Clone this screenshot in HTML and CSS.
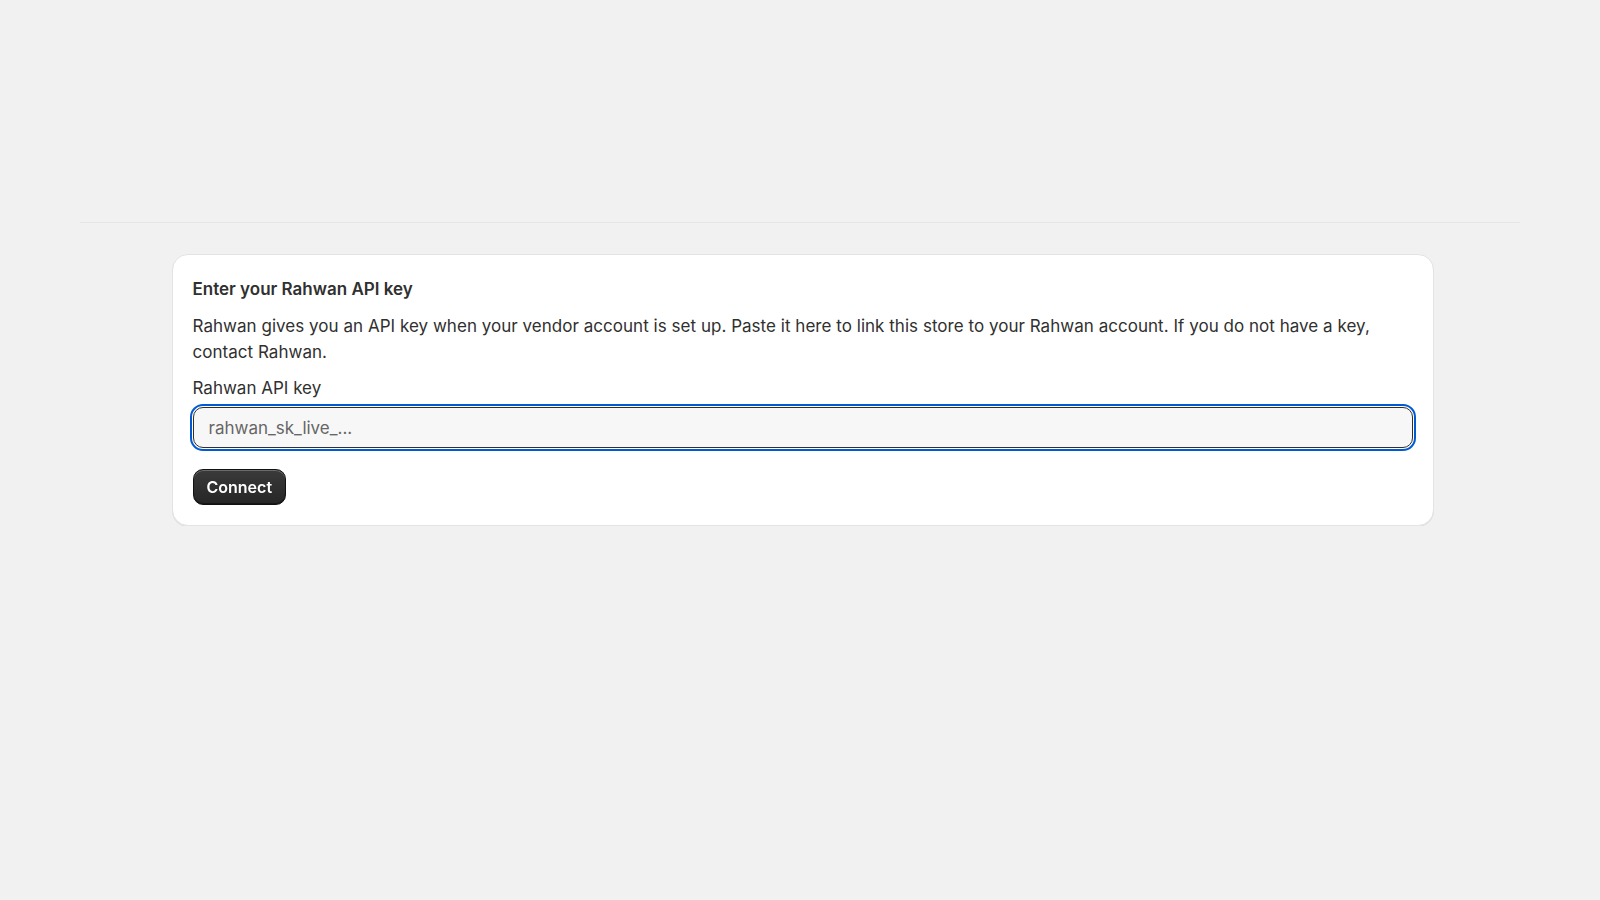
FILE: index.html
```html
<!DOCTYPE html>
<html lang="en">
<head>
  <meta charset="UTF-8" />
  <meta name="viewport" content="width=device-width, initial-scale=1" />
  <title>Connect Rahwan</title>
  <link rel="stylesheet" href="styles.css">
</head>
<body>
  <div class="page">
    <div class="page-header"></div>

    <div class="page-body">
      <div class="card">
        <h2 class="card-title">Enter your Rahwan API key</h2>
        <p class="card-text">
          Rahwan gives you an API key when your vendor account is set up. Paste it here to link this store to your Rahwan account. If you do not have a key, contact Rahwan.
        </p>

        <label class="field-label" for="api-key">Rahwan API key</label>
        <div class="field">
          <input class="field-input" id="api-key" type="text" placeholder="rahwan_sk_live_..." autofocus />
        </div>

        <button class="btn-primary" type="button">Connect</button>
      </div>
    </div>
  </div>
</body>
</html>
```

FILE: styles.css
```css
html, body {
  margin: 0;
  padding: 0;
  background-color: #f1f1f1;
  font-family: Inter, 'Noto Sans', sans-serif;
  color: #303030;
}

.page {
  padding: 0 80px;
}

.page-header {
  height: 222px;
  border-bottom: 1px solid #e6e6e6;
  margin-bottom: 31px;
}

.page-body {
  padding-left: 5px;
}

.card {
  width: 1220px;
  margin: 0 auto;
  padding: 21px 20px 20px;
  background: #ffffff;
  border: 1px solid #e3e3e3;
  border-radius: 16px;
  box-shadow: 0 1px 0 rgba(0, 0, 0, 0.07);
}

.card-title {
  margin: 0;
  font-size: 17px;
  line-height: 26px;
  font-weight: 600;
}

.card-text {
  margin: 12px 0 0;
  font-size: 17px;
  line-height: 25.5px;
  font-weight: 400;
  letter-spacing: 0.03px;
}

.field-label {
  display: block;
  margin-top: 10px;
  font-size: 17px;
  line-height: 26px;
}

.field {
  margin-top: 6px;
}

.field-input {
  box-sizing: border-box;
  width: 100%;
  height: 41px;
  padding: 0 15px;
  font-family: inherit;
  font-size: 17px;
  color: #303030;
  background: #f7f7f7;
  border: 1px solid #303030;
  border-radius: 10px;
  outline: 2px solid #005bd3;
  outline-offset: 1px;
}

.field-input::placeholder {
  color: #666666;
}

.btn-primary {
  display: block;
  margin-top: 21px;
  height: 36px;
  padding: 0 13px;
  font-family: inherit;
  font-size: 16px;
  font-weight: 600;
  color: #ffffff;
  background: linear-gradient(180deg, #3a3a3a 0%, #262626 100%);
  border: 1px solid #111111;
  border-radius: 10px;
  box-shadow:
    inset 0 1px 0 rgba(255, 255, 255, 0.25),
    inset 0 -1px 0 rgba(0, 0, 0, 0.4);
  cursor: pointer;
}
```
